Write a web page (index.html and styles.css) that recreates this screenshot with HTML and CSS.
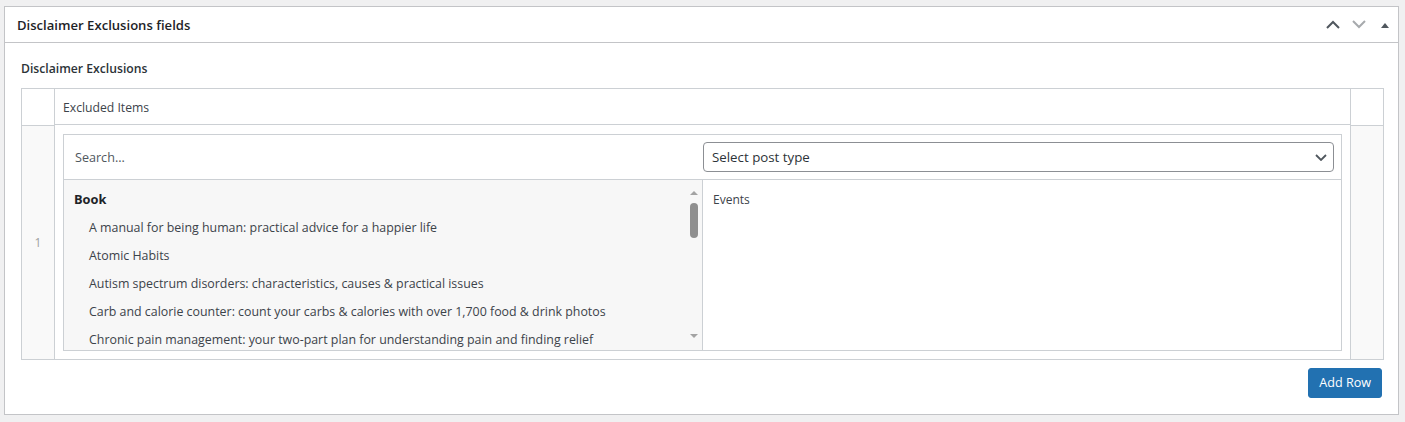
FILE: index.html
```html
<!DOCTYPE html>
<html lang="en">
<head>
<meta charset="utf-8">
<title>Disclaimer Exclusions fields</title>
<link rel="stylesheet" href="styles.css">
</head>
<body>
<div class="postbox">
  <div class="postbox-header">
    <h2 class="postbox-title">Disclaimer Exclusions fields</h2>
    <div class="handle-actions">
      <button class="handle-btn" type="button" aria-label="Move up">
        <svg width="14" height="9" viewBox="0 0 14 9"><path d="M1 8 L7 2 L13 8" fill="none" stroke="#50575e" stroke-width="2"/></svg>
      </button>
      <button class="handle-btn" type="button" aria-label="Move down">
        <svg width="14" height="9" viewBox="0 0 14 9"><path d="M1 1 L7 7 L13 1" fill="none" stroke="#a7aaad" stroke-width="2"/></svg>
      </button>
      <button class="handle-btn" type="button" aria-label="Toggle panel">
        <svg width="8" height="6" viewBox="0 0 8 6"><path d="M0 6 L4 1 L8 6 Z" fill="#50575e"/></svg>
      </button>
    </div>
  </div>
  <div class="inside">
    <div class="field-label">Disclaimer Exclusions</div>
    <div class="repeater">
      <div class="rep-cell rep-order rep-head"></div>
      <div class="rep-cell rep-main rep-head">Excluded Items</div>
      <div class="rep-cell rep-remove rep-head"></div>

      <div class="rep-cell rep-order rep-body"><span class="row-num">1</span></div>
      <div class="rep-cell rep-main rep-body rep-content">
        <div class="relationship">
          <div class="filters">
            <div class="filter-search"><input class="search-input" type="text" placeholder="Search..."></div>
            <div class="filter-type">
              <div class="select-box">
                <span>Select post type</span>
                <svg class="select-chev" width="12" height="7" viewBox="0 0 12 7"><path d="M1 1 L6 6 L11 1" fill="none" stroke="#50575e" stroke-width="1.8"/></svg>
              </div>
            </div>
          </div>
          <div class="lists">
            <div class="choices">
              <ul class="choice-list">
                <li class="group">Book</li>
                <li class="item">A manual for being human: practical advice for a happier life</li>
                <li class="item">Atomic Habits</li>
                <li class="item">Autism spectrum disorders: characteristics, causes &amp; practical issues</li>
                <li class="item">Carb and calorie counter: count your carbs &amp; calories with over 1,700 food &amp; drink photos</li>
                <li class="item">Chronic pain management: your two-part plan for understanding pain and finding relief</li>
              </ul>
              <div class="scrollbar">
                <span class="arrow-up"></span>
                <span class="thumb"></span>
                <span class="track-fill"></span>
                <span class="arrow-down"></span>
              </div>
            </div>
            <div class="values">
              <ul class="value-list">
                <li class="item-value">Events</li>
              </ul>
            </div>
          </div>
        </div>
      </div>
      <div class="rep-cell rep-remove rep-body"></div>
    </div>
    <div class="actions">
      <button class="add-row" type="button">Add Row</button>
    </div>
  </div>
</div>
</body>
</html>
```

FILE: styles.css
```css
html, body {
  margin: 0;
  padding: 0;
}
body {
  background: #f0f0f1;
  padding: 6px 6px 7px 4px;
  font-family: "Open Sans", "Liberation Sans", sans-serif;
  font-size: 12.4px;
  color: #3c434a;
}
.postbox {
  background: #fff;
  border: 1px solid #c3c4c7;
}
.postbox-header {
  display: flex;
  align-items: center;
  height: 35px;
  border-bottom: 1px solid #c3c4c7;
}
.postbox-title {
  flex: 1;
  margin: 0;
  padding-left: 12px;
  padding-top: 1px;
  font-size: 13.1px;
  font-weight: 600;
  color: #1d2327;
  line-height: 1.4;
}
.handle-actions {
  display: flex;
  height: 100%;
}
.handle-btn {
  width: 26px;
  height: 100%;
  padding: 0;
  margin: 0;
  border: 0;
  background: transparent;
  display: flex;
  align-items: center;
  justify-content: center;
}
.handle-btn svg {
  display: block;
}
.inside {
  padding: 17px 14px 16px 16px;
}
.field-label {
  font-size: 12.2px;
  font-weight: 600;
  color: #2c3338;
  line-height: 18px;
  margin-bottom: 10px;
}
.repeater {
  display: grid;
  grid-template-columns: 33px 1fr 33px;
  border: 1px solid #ccd0d4;
}
.rep-head {
  height: 36px;
  border-bottom: 1px solid #ccd0d4;
}
.rep-order {
  border-right: 1px solid #ccd0d4;
}
.rep-remove {
  border-left: 1px solid #ccd0d4;
}
.rep-main.rep-head {
  display: flex;
  align-items: center;
  padding-left: 8px;
  font-size: 12.2px;
  color: #3c434a;
  padding-top: 2px;
  box-sizing: border-box;
}
.rep-order.rep-body,
.rep-remove.rep-body {
  background: #f9f9f9;
}
.rep-order.rep-body {
  display: flex;
  align-items: center;
  justify-content: center;
}
.row-num {
  color: #a0a0a0;
  font-size: 12px;
}
.rep-content {
  padding: 8px;
}
.relationship {
  border: 1px solid #ccd0d4;
  background: #fff;
}
.filters {
  display: flex;
  height: 44px;
  border-bottom: 1px solid #ccd0d4;
}
.filter-search {
  width: 639px;
  display: flex;
  align-items: center;
}
.search-input {
  width: 100%;
  border: 0;
  outline: none;
  padding: 0 11px;
  font-family: inherit;
  font-size: 12.6px;
  color: #2c3338;
  background: transparent;
}
.search-input::placeholder {
  color: #50575e;
}
.filter-type {
  flex: 1;
  display: flex;
  align-items: center;
  padding-right: 7px;
}
.select-box {
  flex: 1;
  height: 30px;
  box-sizing: border-box;
  border: 1px solid #8c8f94;
  border-radius: 4px;
  display: flex;
  align-items: center;
  justify-content: space-between;
  padding: 0 6px 0 8px;
  font-size: 13.3px;
  color: #2c3338;
}
.select-chev {
  display: block;
}
.lists {
  display: flex;
  height: 170px;
}
.choices {
  width: 638px;
  border-right: 1px solid #ccd0d4;
  background: #f7f7f7;
  display: flex;
  overflow: hidden;
}
.choice-list,
.value-list {
  list-style: none;
  margin: 0;
  padding: 6px 0 0;
}
.choice-list {
  flex: 1;
  overflow: hidden;
}
.choice-list li,
.value-list li {
  height: 28px;
  line-height: 28px;
  white-space: nowrap;
  color: #3c434a;
}
.choice-list .group {
  padding-left: 10px;
  font-weight: 700;
  font-size: 12.8px;
  color: #1d2327;
  line-height: 26px;
}
.choice-list .item {
  padding-left: 25px;
}
.scrollbar {
  width: 16px;
  display: flex;
  flex-direction: column;
  align-items: center;
  padding: 11px 0 12px;
}
.arrow-up {
  width: 0;
  height: 0;
  border-left: 4px solid transparent;
  border-right: 4px solid transparent;
  border-bottom: 4px solid #a3a3a3;
}
.thumb {
  margin-top: 8px;
  width: 8px;
  height: 35px;
  border-radius: 4px;
  background: #8f8f8f;
}
.track-fill {
  flex: 1;
}
.arrow-down {
  width: 0;
  height: 0;
  border-left: 4px solid transparent;
  border-right: 4px solid transparent;
  border-top: 4px solid #a3a3a3;
}
.values {
  flex: 1;
  background: #fff;
}
.value-list li {
  padding-left: 10px;
  font-size: 12px;
}
.actions {
  display: flex;
  justify-content: flex-end;
  padding-top: 8px;
  padding-right: 2px;
}
.add-row {
  height: 30px;
  padding: 0 10px;
  border: 1px solid #2271b1;
  border-radius: 3px;
  background: #2271b1;
  color: #fff;
  font-family: inherit;
  font-size: 12.6px;
  line-height: 28px;
}
```
